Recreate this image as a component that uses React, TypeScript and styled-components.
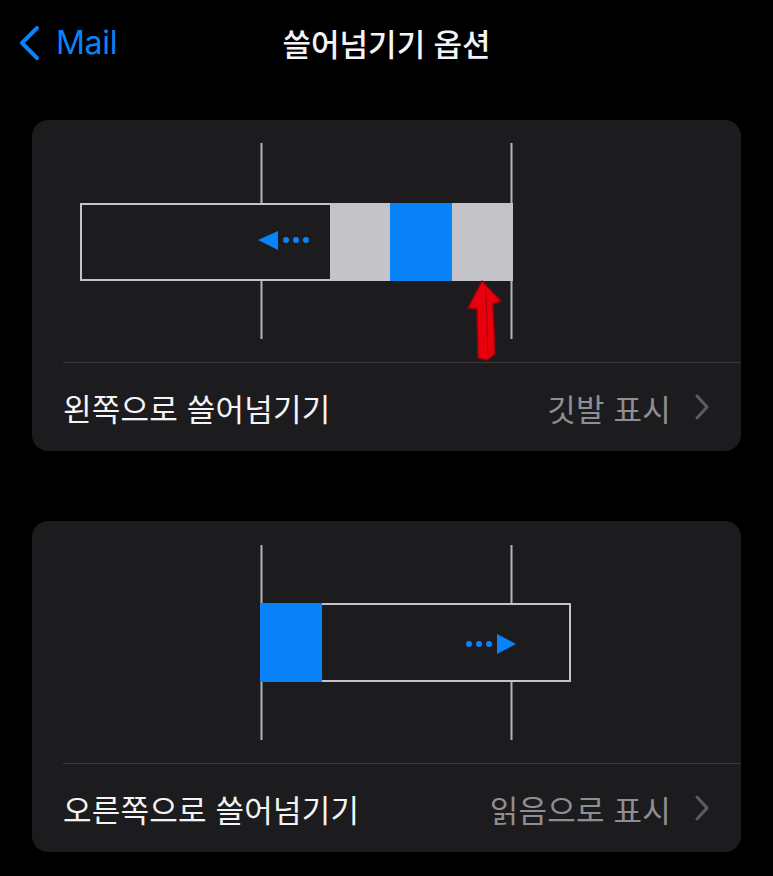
import React from 'react';
import styled, { createGlobalStyle } from 'styled-components';

const GlobalStyle = createGlobalStyle`
  body {
    margin: 0;
    background: #000;
    font-family: 'Inter', 'Noto Sans CJK KR', sans-serif;
    -webkit-font-smoothing: antialiased;
  }
`;

const colors = {
  card: '#1c1c1e',
  blue: '#0a82f8',
  guide: '#b4b4b8',
  block: '#c4c3c8',
  text: '#f4f4f6',
  sub: '#8e8e93',
  chevron: '#5c5c60',
  divider: '#38383a',
};

const Page = styled.div`
  width: 773px;
  min-height: 876px;
  background: #000;
`;

const Header = styled.header`
  display: grid;
  grid-template-columns: 1fr auto 1fr;
  align-items: center;
  height: 85px;
`;

const Back = styled.div`
  display: flex;
  align-items: center;
  gap: 15px;
  padding-left: 17px;
  color: ${colors.blue};
  font-size: 32px;
  letter-spacing: -0.3px;
`;

const Title = styled.h1`
  margin: 0;
  color: ${colors.text};
  font-size: 31px;
  font-weight: 500;
  letter-spacing: 0;
`;

const Cards = styled.main`
  display: flex;
  flex-direction: column;
  gap: 70px;
  padding: 35px 32px 24px;
`;

const Card = styled.section`
  background: ${colors.card};
  border-radius: 16px;
  overflow: hidden;
`;

const Diagram = styled.svg`
  display: block;
  width: 709px;
  height: 242px;
`;

const Row = styled.div`
  display: flex;
  align-items: center;
  justify-content: space-between;
  height: 88px;
  margin-left: 31px;
  padding-right: 32px;
  border-top: 1px solid ${colors.divider};
`;

const Label = styled.span`
  color: ${colors.text};
  font-size: 31px;
  letter-spacing: 0.2px;
`;

const Value = styled.span`
  display: flex;
  align-items: center;
  gap: 24px;
  color: ${colors.sub};
  font-size: 31px;
  letter-spacing: 0.2px;
`;

function BackChevron() {
  return (
    <svg width="24" height="36" viewBox="0 0 24 36">
      <path d="M20 3 L5 18 L20 33" fill="none" stroke={colors.blue} strokeWidth="4" strokeLinecap="round" strokeLinejoin="round" />
    </svg>
  );
}

function RowChevron() {
  return (
    <svg width="14" height="26" viewBox="0 0 14 26">
      <path d="M2 2 L12 13 L2 24" fill="none" stroke={colors.chevron} strokeWidth="3" strokeLinecap="round" strokeLinejoin="round" />
    </svg>
  );
}

function Guides({ top }: { top: number }) {
  return (
    <>
      <line x1="229.5" y1={top} x2="229.5" y2="219" stroke={colors.guide} strokeWidth="2" />
      <line x1="479.5" y1={top} x2="479.5" y2="219" stroke={colors.guide} strokeWidth="2" />
    </>
  );
}

function LeftSwipe() {
  return (
    <Diagram viewBox="0 0 709 242">
      <Guides top={23} />
      <rect x="49" y="84" width="431" height="76" fill={colors.card} stroke={colors.block} strokeWidth="2" />
      <rect x="298" y="83" width="60" height="78" fill={colors.block} />
      <rect x="358" y="83" width="62" height="78" fill={colors.blue} />
      <rect x="420" y="83" width="61" height="78" fill={colors.block} />
      <polygon points="226,120 246,111 246,130" fill={colors.blue} />
      <circle cx="254" cy="120" r="3" fill={colors.blue} />
      <circle cx="264" cy="120" r="3" fill={colors.blue} />
      <circle cx="274" cy="120" r="3" fill={colors.blue} />
      <polygon
        points="450,161 469,181 461,184 463,234 455,240 446,238 445,189 436,188"
        fill="#e8000c"
        stroke="#9a0008"
        strokeWidth="1.5"
        strokeLinejoin="round"
      />
      <path d="M454 170 L456 236" stroke="#b0000a" strokeWidth="1" fill="none" />
    </Diagram>
  );
}

function RightSwipe() {
  return (
    <Diagram viewBox="0 0 709 242">
      <Guides top={24} />
      <rect x="229" y="83" width="309" height="77" fill={colors.card} stroke={colors.block} strokeWidth="2" />
      <rect x="228" y="82" width="62" height="79" fill={colors.blue} />
      <circle cx="437" cy="123" r="3" fill={colors.blue} />
      <circle cx="447" cy="123" r="3" fill={colors.blue} />
      <circle cx="457" cy="123" r="3" fill={colors.blue} />
      <polygon points="465,113 484,123 465,133" fill={colors.blue} />
    </Diagram>
  );
}

export default function App() {
  return (
    <Page>
      <GlobalStyle />
      <Header>
        <Back>
          <BackChevron />
          <span>Mail</span>
        </Back>
        <Title>쓸어넘기기 옵션</Title>
        <div />
      </Header>
      <Cards>
        <Card>
          <LeftSwipe />
          <Row>
            <Label>왼쪽으로 쓸어넘기기</Label>
            <Value>
              깃발 표시
              <RowChevron />
            </Value>
          </Row>
        </Card>
        <Card>
          <RightSwipe />
          <Row>
            <Label>오른쪽으로 쓸어넘기기</Label>
            <Value>
              읽음으로 표시
              <RowChevron />
            </Value>
          </Row>
        </Card>
      </Cards>
    </Page>
  );
}
